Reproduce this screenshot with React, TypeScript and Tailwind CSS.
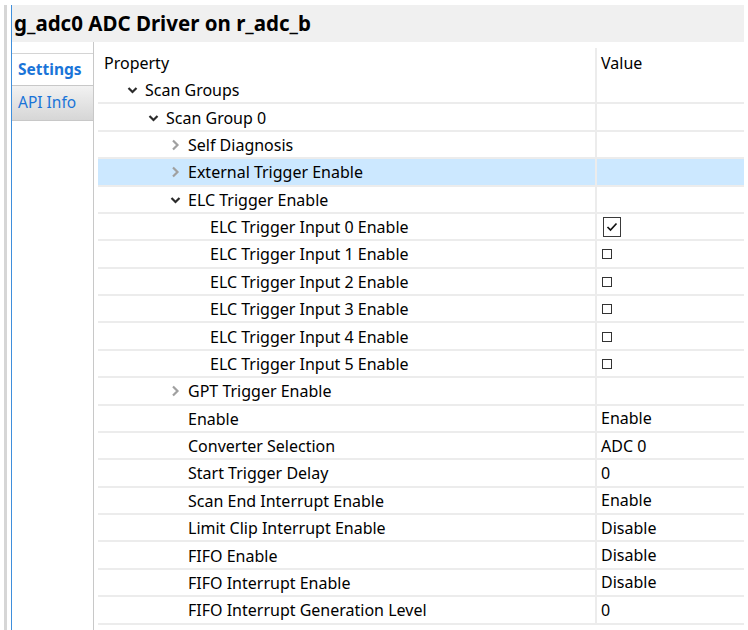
import { ReactNode } from 'react';

type Row = {
  label: string;
  level: number;
  chevron?: 'down' | 'right';
  value?: string;
  check?: boolean;
  selected?: boolean;
};

const rows: Row[] = [
  { label: 'Scan Groups', level: 0, chevron: 'down' },
  { label: 'Scan Group 0', level: 1, chevron: 'down' },
  { label: 'Self Diagnosis', level: 2, chevron: 'right' },
  { label: 'External Trigger Enable', level: 2, chevron: 'right', selected: true },
  { label: 'ELC Trigger Enable', level: 2, chevron: 'down' },
  { label: 'ELC Trigger Input 0 Enable', level: 3, check: true },
  { label: 'ELC Trigger Input 1 Enable', level: 3, check: false },
  { label: 'ELC Trigger Input 2 Enable', level: 3, check: false },
  { label: 'ELC Trigger Input 3 Enable', level: 3, check: false },
  { label: 'ELC Trigger Input 4 Enable', level: 3, check: false },
  { label: 'ELC Trigger Input 5 Enable', level: 3, check: false },
  { label: 'GPT Trigger Enable', level: 2, chevron: 'right' },
  { label: 'Enable', level: 2, value: 'Enable' },
  { label: 'Converter Selection', level: 2, value: 'ADC 0' },
  { label: 'Start Trigger Delay', level: 2, value: '0' },
  { label: 'Scan End Interrupt Enable', level: 2, value: 'Enable' },
  { label: 'Limit Clip Interrupt Enable', level: 2, value: 'Disable' },
  { label: 'FIFO Enable', level: 2, value: 'Disable' },
  { label: 'FIFO Interrupt Enable', level: 2, value: 'Disable' },
  { label: 'FIFO Interrupt Generation Level', level: 2, value: '0' },
];

// text start offsets from the table's left edge, per tree level
const indent = ['pl-[29px]', 'pl-[50px]', 'pl-[72px]', 'pl-[94px]'];

function Chevron({ dir }: { dir?: 'down' | 'right' }) {
  if (!dir) return <span className="w-[18px] shrink-0" />;
  return (
    <span className="w-[18px] shrink-0 flex items-center">
      {dir === 'down' ? (
        <svg width="12" height="12" viewBox="0 0 12 12">
          <polyline points="1.5,4 5.5,8 9.5,4" fill="none" stroke="#2b2b2b" strokeWidth="2.2" />
        </svg>
      ) : (
        <svg width="12" height="12" viewBox="0 0 12 12">
          <polyline points="3,1.5 7.5,6 3,10.5" fill="none" stroke="#a0a0a0" strokeWidth="2.2" />
        </svg>
      )}
    </span>
  );
}

function ValueCell({ row }: { row: Row }) {
  let content: ReactNode = row.value ?? null;
  if (row.check === true) {
    content = (
      <span className="w-[18px] h-[20px] border border-[#3a3a3a] flex items-center justify-center ml-[2px]">
        <svg width="12" height="10" viewBox="0 0 12 10">
          <polyline points="1.5,5 4.5,8 10.5,1.5" fill="none" stroke="#111" strokeWidth="1.7" />
        </svg>
      </span>
    );
  } else if (row.check === false) {
    content = <span className="w-[10px] h-[10px] border border-[#333] ml-[1px] mt-[1px]" />;
  }
  return (
    <div className="flex-1 h-full border-l-2 border-[#ececec] pl-[4px] flex items-center">{content}</div>
  );
}

export default function App() {
  return (
    <div className="w-[748px] h-[630px] bg-white overflow-hidden flex text-black" style={{ fontFamily: '"Noto Sans", sans-serif' }}>
      {/* left edge strips */}
      <div className="w-[4px] shrink-0" />
      <div className="w-[3px] shrink-0 mt-[5px] bg-[#d6d6d6]" />
      <div className="w-[4px] shrink-0" />
      <div className="w-[1px] shrink-0 mt-[5px] bg-[#3f8fdc]" />

      <div className="w-[732px] shrink-0 mt-[5px] flex flex-col">
        {/* Title */}
        <div className="h-[37px] bg-[#f0f0f0] flex items-center pl-[2px]">
          <h1 className="text-[20.5px] font-bold">g_adc0 ADC Driver on r_adc_b</h1>
        </div>

        <div className="flex flex-1">
          {/* Tabs */}
          <div className="w-[82px] shrink-0 border-r border-[#c8c8c8] pt-[11px] text-[15.5px]">
            <div className="h-[32px] border-t border-[#d4d4d4] bg-white flex items-center pl-[6px] font-bold text-[#1a74d8]">
              Settings
            </div>
            <div className="h-[36px] border-y border-[#c8c8c8] bg-gradient-to-b from-[#f2f2f2] to-[#d6d6d6] flex items-center pl-[6px] text-[#1a74d8]">
              API Info
            </div>
          </div>

          {/* Property table */}
          <div className="flex-1 pl-[4px] pt-[6px] text-[16px]">
            <div className="flex h-[29px] items-center">
              <div className="w-[497px] pl-[6px] pt-[1px]">Property</div>
              <div className="flex-1 h-full border-l-2 border-[#ececec] pl-[4px] pt-[1px] flex items-center">Value</div>
            </div>
            {rows.map((row, i) => (
              <div
                key={i}
                className={`flex h-[27.38px] items-center border-b-2 border-[#ececec] ${row.selected ? 'bg-[#cce8ff]' : ''}`}
              >
                <div className={`w-[497px] flex items-center pt-[1px] ${indent[row.level]}`}>
                  <Chevron dir={row.chevron} />
                  <span className="whitespace-nowrap">{row.label}</span>
                </div>
                <ValueCell row={row} />
              </div>
            ))}
          </div>
        </div>
      </div>
    </div>
  );
}
